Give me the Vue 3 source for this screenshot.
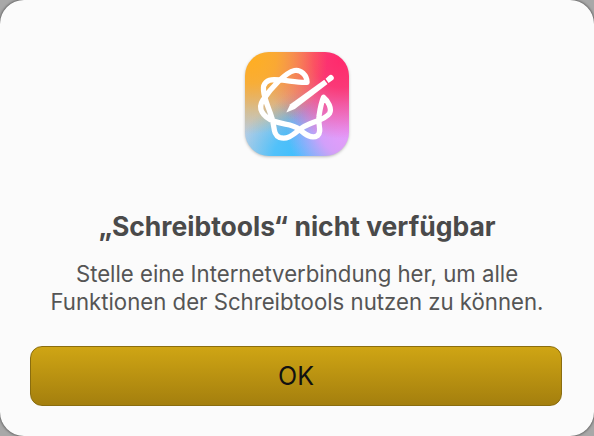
<template>
  <div class="backdrop">
    <div class="dialog">
      <div class="app-icon">
        <svg class="glyph" viewBox="30 30 315 315" fill="none">
          <path stroke="#fff" stroke-width="16" stroke-linejoin="round" d="M218 122C218 100 198 82 180 86C152 92 108 140 84 176C68 200 82 226 118 240C150 252 172 245 195 265C212 280 232 295 250 283C264 270 250 248 254 225C257 205 262 180 268 167C282 178 294 202 286 216C276 232 245 240 225 248C210 254 205 258 195 265C178 278 160 297 135 289C114 280 120 255 112 232C105 205 88 175 86 145C84 124 98 114 118 114C150 114 190 124 218 122Z" />
          <path fill="#fff" d="M155 213L167 188L270 114L280 127L181 203Z" />
          <path fill="#fff" d="M274 111L284 102A8 8 0 0 1 296 115L283 124Z" />
        </svg>
      </div>
      <h1 class="title">„Schreibtools“ nicht verfügbar</h1>
      <p class="message">Stelle eine Internetverbindung her, um alle<br />Funktionen der Schreibtools nutzen zu können.</p>
      <button type="button" class="ok">OK</button>
    </div>
  </div>
</template>

<script setup>
</script>

<style>
body {
  margin: 0;
}
</style>

<style scoped>
.backdrop {
  width: 594px;
  height: 436px;
  overflow: hidden;
  background: #a8a8a8;
}

.dialog {
  box-sizing: border-box;
  width: 594px;
  height: 436px;
  display: flex;
  flex-direction: column;
  align-items: center;
  padding-top: 52px;
  border-radius: 24px;
  background: #fbfbfb;
  box-shadow: 0 0 3px rgba(0, 0, 0, 0.75);
  font-family: Inter, "Liberation Sans", sans-serif;
}

.app-icon {
  width: 104px;
  height: 104px;
  border-radius: 24px;
  box-shadow: 0 1px 3px rgba(0, 0, 0, 0.25);
  background:
    radial-gradient(circle at 6% 6%, #ffae22 0%, rgba(255, 174, 34, 0.85) 18%, rgba(255, 174, 34, 0) 55%),
    radial-gradient(circle at 92% 8%, #ff2a6d 0%, rgba(255, 42, 109, 0.88) 20%, rgba(255, 42, 109, 0) 58%),
    radial-gradient(circle at 96% 74%, #e39cff 0%, rgba(227, 156, 255, 0.85) 20%, rgba(227, 156, 255, 0) 46%),
    radial-gradient(circle at 50% 102%, #3fc0ff 0%, rgba(63, 192, 255, 0.85) 20%, rgba(63, 192, 255, 0) 50%),
    radial-gradient(circle at 52% 68%, #8fa0d4 0%, rgba(143, 160, 212, 0) 35%),
    radial-gradient(circle at 2% 85%, #b6cde4 0%, rgba(182, 205, 228, 0.9) 22%, rgba(182, 205, 228, 0) 50%),
    #d6a3a3;
}

.glyph {
  display: block;
  width: 104px;
  height: 104px;
}

.title {
  margin: 56px 0 0;
  font-size: 26.5px;
  line-height: 28px;
  font-weight: 700;
  white-space: nowrap;
  color: #4a4a4a;
}

.message {
  margin: 20px 0 0;
  font-size: 22.2px;
  line-height: 28px;
  font-weight: 400;
  text-align: center;
  white-space: nowrap;
  color: #555;
}

.ok {
  box-sizing: border-box;
  align-self: flex-start;
  width: 532px;
  height: 60px;
  margin: 30px 0 0 30px;
  padding-bottom: 2px;
  border: 1px solid #8a6d0f;
  border-radius: 12px;
  background: linear-gradient(#cfa514, #a47f0e);
  font-family: inherit;
  font-size: 25px;
  color: #111;
}
</style>
